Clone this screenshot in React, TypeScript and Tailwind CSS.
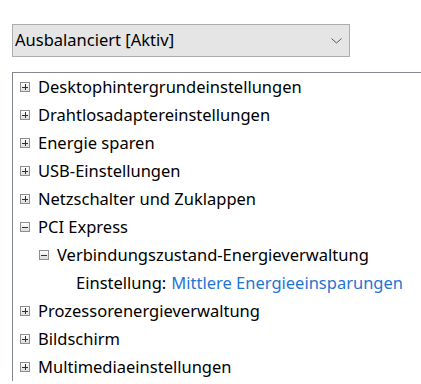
type Node = {
  label: string;
  level: number;
  toggle?: 'plus' | 'minus';
  value?: string;
};

const nodes: Node[] = [
  { label: 'Desktophintergrundeinstellungen', level: 0, toggle: 'plus' },
  { label: 'Drahtlosadaptereinstellungen', level: 0, toggle: 'plus' },
  { label: 'Energie sparen', level: 0, toggle: 'plus' },
  { label: 'USB-Einstellungen', level: 0, toggle: 'plus' },
  { label: 'Netzschalter und Zuklappen', level: 0, toggle: 'plus' },
  { label: 'PCI Express', level: 0, toggle: 'minus' },
  { label: 'Verbindungszustand-Energieverwaltung', level: 1, toggle: 'minus' },
  { label: 'Einstellung:', level: 2, value: 'Mittlere Energieeinsparungen' },
  { label: 'Prozessorenergieverwaltung', level: 0, toggle: 'plus' },
  { label: 'Bildschirm', level: 0, toggle: 'plus' },
  { label: 'Multimediaeinstellungen', level: 0, toggle: 'plus' },
];

// small windows-style expander box
function Expander({ kind }: { kind: 'plus' | 'minus' }) {
  return (
    <span className="relative flex h-[10px] w-[10px] shrink-0 items-center justify-center border border-[#8e8f8f] bg-gradient-to-b from-white to-[#dcdcdc]">
      <span className="absolute h-px w-[6px] bg-[#303030]" />
      {kind === 'plus' && <span className="absolute h-[6px] w-px bg-[#303030]" />}
    </span>
  );
}

const indent = ['pl-[7px]', 'pl-[26px]', 'pl-[63px]'];

export default function App() {
  return (
    <div className="h-[384px] w-[421px] overflow-hidden bg-white font-['Noto_Sans','Open_Sans',sans-serif] text-[16.5px] leading-none text-black">
      <div className="pl-3 pt-6">
        <div className="flex h-[33px] w-[338px] items-center justify-between border border-[#adadad] bg-[#e5e5e5] pl-[2px] pr-[7px]">
          <span>Ausbalanciert [Aktiv]</span>
          <svg width="11" height="6" viewBox="0 0 11 6">
            <path d="M0.5 0.5 L5.5 5 L10.5 0.5" fill="none" stroke="#555" strokeWidth="1" />
          </svg>
        </div>
      </div>

      <div className="ml-3 mt-[15px] border-l border-t border-[#828790]">
        {nodes.map((n, i) => (
          <div key={i} className={`flex h-[28px] items-center whitespace-nowrap ${indent[n.level]}`}>
            {n.toggle ? (
              <>
                <Expander kind={n.toggle} />
                <span className="ml-[8px]">{n.label}</span>
              </>
            ) : (
              <>
                <span>{n.label}</span>
                <span className="ml-[5px] text-[#1f74d4]">{n.value}</span>
              </>
            )}
          </div>
        ))}
      </div>
    </div>
  );
}
